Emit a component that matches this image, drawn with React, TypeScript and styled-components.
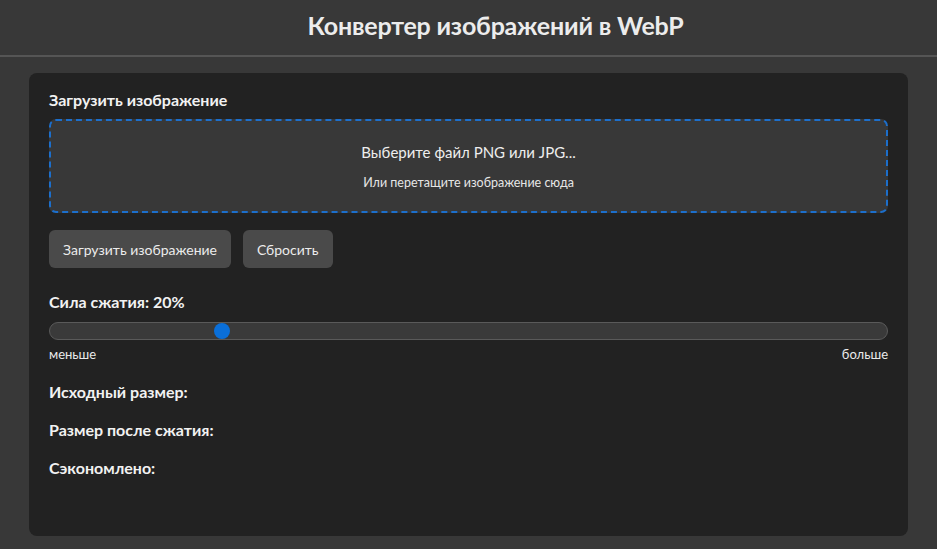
import React, { useState } from "react";
import styled, { createGlobalStyle } from "styled-components";

const GlobalStyle = createGlobalStyle`
  html, body {
    margin: 0;
    padding: 0;
    background: #383838;
    color: #f0f0f0;
    font-family: "Lato", "Open Sans", sans-serif;
  }
  * { box-sizing: border-box; }
`;

const Header = styled.header`
  height: 57px;
  display: flex;
  align-items: center;
  justify-content: center;
  padding: 0 0 5px 54px;
  border-bottom: 2px solid #555555;
`;

const Title = styled.h1`
  margin: 0;
  font-size: 25px;
  font-weight: 700;
  color: #ececec;
  letter-spacing: -0.2px;
`;

const Main = styled.main`
  padding: 16px 29px 14px;
`;

const Card = styled.section`
  background: #222222;
  border-radius: 8px;
  padding: 17px 20px 58px;
  display: flex;
  flex-direction: column;
`;

const Label = styled.div<{ $mb?: number }>`
  font-size: 16px;
  font-weight: 700;
  color: #f2f2f2;
  line-height: 20px;
  margin-bottom: ${(p) => p.$mb ?? 0}px;
`;

const DropZone = styled.div`
  height: 94px;
  border: 2px dashed #1c6fcc;
  border-radius: 7px;
  background: #383838;
  display: flex;
  flex-direction: column;
  align-items: center;
  justify-content: center;
  gap: 14px;
`;

const DropMain = styled.div`
  font-size: 15px;
  color: #eeeeee;
`;

const DropHint = styled.div`
  font-size: 12.5px;
  color: #e6e6e6;
`;

const Buttons = styled.div`
  display: flex;
  gap: 12px;
  margin: 17px 0 24px;
`;

const Button = styled.button`
  height: 38px;
  padding: 0 14px;
  border: none;
  border-radius: 6px;
  background: #4a4a4a;
  color: #ececec;
  font-family: inherit;
  font-size: 14px;
  cursor: pointer;
`;

const Range = styled.input`
  -webkit-appearance: none;
  appearance: none;
  width: 100%;
  height: 18px;
  margin: 10px 0 6px;
  background: #3a3a3a;
  border: 1px solid #5a5a5a;
  border-radius: 9px;
  outline: none;

  &::-webkit-slider-thumb {
    -webkit-appearance: none;
    width: 16px;
    height: 16px;
    border-radius: 50%;
    background: #0a6fd9;
    border: none;
  }
`;

const RangeScale = styled.div`
  display: flex;
  justify-content: space-between;
  font-size: 13px;
  color: #eaeaea;
  margin-bottom: 20px;
`;

const Stats = styled.div`
  display: flex;
  flex-direction: column;
  gap: 18px;
`;

export default function App() {
  const [level, setLevel] = useState(20);
  return (
    <>
      <GlobalStyle />
      <Header>
        <Title>Конвертер изображений в WebP</Title>
      </Header>
      <Main>
        <Card>
          <Label $mb={9}>Загрузить изображение</Label>
          <DropZone>
            <DropMain>Выберите файл PNG или JPG...</DropMain>
            <DropHint>Или перетащите изображение сюда</DropHint>
          </DropZone>
          <Buttons>
            <Button>Загрузить изображение</Button>
            <Button>Сбросить</Button>
          </Buttons>
          <Label>Сила сжатия: {level}%</Label>
          <Range
            type="range"
            min={0}
            max={100}
            value={level}
            onChange={(e) => setLevel(Number(e.target.value))}
          />
          <RangeScale>
            <span>меньше</span>
            <span>больше</span>
          </RangeScale>
          <Stats>
            <Label>Исходный размер:</Label>
            <Label>Размер после сжатия:</Label>
            <Label>Сэкономлено:</Label>
          </Stats>
        </Card>
      </Main>
    </>
  );
}
